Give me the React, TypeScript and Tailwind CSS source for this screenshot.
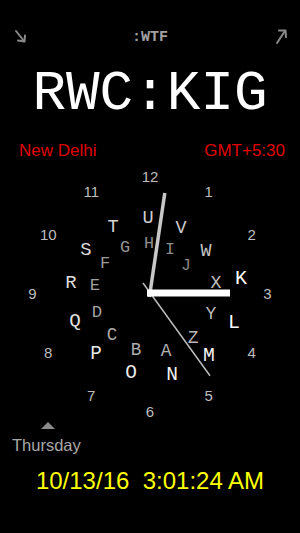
import React from 'react';

const CX = 150;
const CY = 130;
const TOP = 163;

// letters along the spiral, outermost first (page coords of glyph centers)
const letters: [string, number, number][] = [
  ['K', 241, 279],
  ['L', 234, 323],
  ['M', 209, 357],
  ['N', 172, 376],
  ['O', 131, 374],
  ['P', 96, 355],
  ['Q', 75, 322],
  ['R', 71, 284],
  ['S', 86, 250],
  ['T', 113, 227],
  ['U', 148, 219],
  ['V', 181, 229],
  ['W', 206, 252],
  ['X', 216, 283],
  ['Y', 211, 314],
  ['Z', 193, 339],
  ['A', 166, 352],
  ['B', 136, 351],
  ['C', 112, 336],
  ['D', 97, 313],
  ['E', 95, 286],
  ['F', 105, 264],
  ['G', 125, 248],
  ['H', 149, 244],
  ['I', 170, 250],
  ['J', 186, 266],
];

function ClockFace() {
  const hours = Array.from({ length: 12 }, (_, i) => i + 1);
  return (
    <div className="relative w-[300px] h-[257px]">
      {hours.map((h) => {
        const a = (h * 30 * Math.PI) / 180;
        const x = CX + Math.sin(a) * 117.5;
        const y = CY - Math.cos(a) * 117.5;
        return (
          <span
            key={h}
            className="absolute -translate-x-1/2 -translate-y-1/2 leading-none text-[15px] text-[#bdbdbd] font-['Liberation_Sans',Arial,sans-serif]"
            style={{ left: x, top: y }}
          >
            {h}
          </span>
        );
      })}
      {letters.map(([ch, x, y], i) => {
        const t = i / (letters.length - 1);
        const size = 20 - t * 3.5;
        const c = Math.round(255 - t * 120);
        return (
          <span
            key={ch}
            className="absolute -translate-x-1/2 -translate-y-1/2 leading-none font-['Liberation_Mono','Courier_New',monospace]"
            style={{ left: x, top: y - TOP, fontSize: size, color: `rgb(${c},${c},${c})` }}
          >
            {ch}
          </span>
        );
      })}
      <svg className="absolute left-0 top-0" width="300" height="257" viewBox="0 0 300 257">
        <line x1="143" y1="120" x2="210" y2="212.7" stroke="#bdbdbd" strokeWidth="1.5" />
        <line x1="149.4" y1="134" x2="164.8" y2="30" stroke="#c8c8c8" strokeWidth="3.5" />
        <rect x="147" y="126.5" width="83" height="7" fill="#ffffff" />
      </svg>
    </div>
  );
}

export default function App() {
  return (
    <div className="w-[300px] h-[533px] bg-black overflow-hidden">
      <div className="mt-[23px] h-[28px] px-[12px] flex items-center justify-between">
        <svg width="16" height="16" viewBox="0 0 16 16" fill="none" stroke="#8a8a8a" strokeWidth="2" strokeLinecap="round" strokeLinejoin="round">
          <path d="M4 2 L12 12" />
          <path d="M6 11.5 L12.5 12.5 L13 6.5" />
        </svg>
        <span className="text-[15px] leading-none font-bold text-[#a0a0a0] font-['Liberation_Mono','Courier_New',monospace]">:WTF</span>
        <svg width="16" height="16" viewBox="0 0 16 16" fill="none" stroke="#8a8a8a" strokeWidth="2" strokeLinecap="round" strokeLinejoin="round">
          <path d="M5 14 L13 2" />
          <path d="M7 1.5 L13.5 1.5 L14 8" />
        </svg>
      </div>
      <div className="mt-[15px] text-center text-white text-[56px] leading-none font-['Liberation_Mono','Courier_New',monospace]">
        RWC:KIG
      </div>
      <div className="mt-[20px] px-[19px] flex justify-between text-[17px] leading-none text-[#e10000] font-['Liberation_Sans',Arial,sans-serif]">
        <span>New Delhi</span>
        <span className="mr-[-4px]">GMT+5:30</span>
      </div>
      <div className="mt-[4px]">
        <ClockFace />
      </div>
      <div className="mt-[2px] pl-[41px]">
        <div className="w-0 h-0 border-l-[7px] border-r-[7px] border-b-[7px] border-l-transparent border-r-transparent border-b-[#8a8a8a]" />
      </div>
      <div className="mt-[8px] pl-[12px] text-[16.5px] leading-none text-[#a8a8a8] font-['Liberation_Sans',Arial,sans-serif]">
        Thursday
      </div>
      <div className="mt-[15px] text-center text-[24px] leading-none text-[#ffff00] font-['Liberation_Sans',Arial,sans-serif] whitespace-pre">
        {'10/13/16  3:01:24 AM'}
      </div>
    </div>
  );
}
